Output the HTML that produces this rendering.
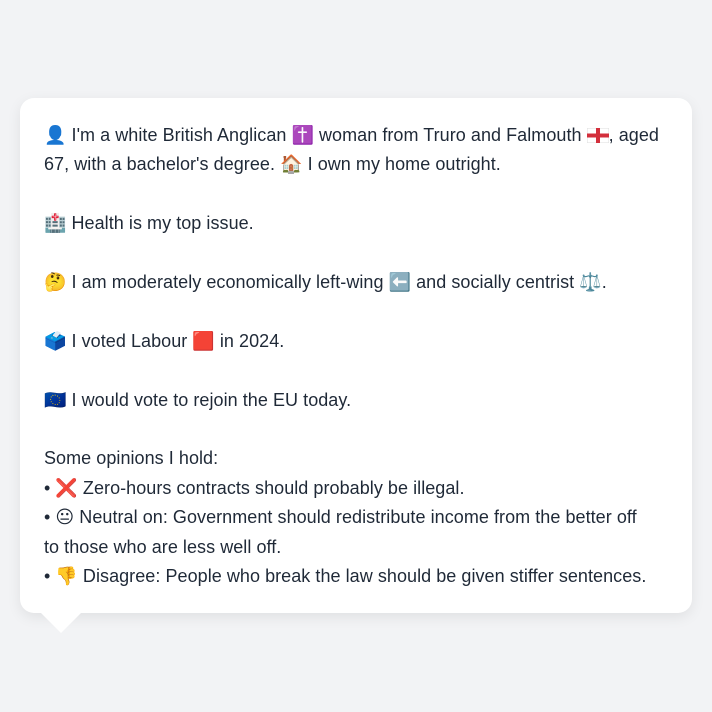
<!DOCTYPE html>
<html><head><meta charset="utf-8"><style>
html,body{margin:0;padding:0;width:712px;height:712px;background:#f2f3f5;overflow:hidden}
.card{position:absolute;left:20px;top:98px;width:672px;height:515px;background:#fff;border-radius:14px;box-shadow:0 4px 14px rgba(0,0,0,0.08)}
.tail{position:absolute;left:41px;top:613px;width:0;height:0;border-left:20px solid transparent;border-right:20px solid transparent;border-top:20px solid #fff}
.txt{position:absolute;left:44px;top:121px;font-family:"Liberation Sans","DejaVu Sans",sans-serif;font-size:18px;letter-spacing:0.05px;line-height:29.4px;color:#1f2937;white-space:nowrap}
.flag{display:inline-block;vertical-align:-2px;width:22px;height:15px}
</style></head><body>
<div class="card"></div><div class="tail"></div>
<div class="txt">👤 I'm a white British Anglican ✝️ woman from Truro and Falmouth <svg class="flag" viewBox="0 0 22 15"><rect width="22" height="15" fill="#fff" stroke="#ddd"/><rect x="9" width="4" height="15" fill="#d32f3c"/><rect y="5.5" width="22" height="4" fill="#d32f3c"/></svg>, aged<br>67, with a bachelor's degree. 🏠 I own my home outright.<br><br>🏥 Health is my top issue.<br><br>🤔 I am moderately economically left-wing ⬅️ and socially centrist ⚖️.<br><br>🗳️ I voted Labour 🟥 in 2024.<br><br>🇪🇺 I would vote to rejoin the EU today.<br><br>Some opinions I hold:<br>• ❌ Zero-hours contracts should probably be illegal.<br>• 😐 Neutral on: Government should redistribute income from the better off<br>to those who are less well off.<br>• 👎 Disagree: People who break the law should be given stiffer sentences.</div>
</body></html>
